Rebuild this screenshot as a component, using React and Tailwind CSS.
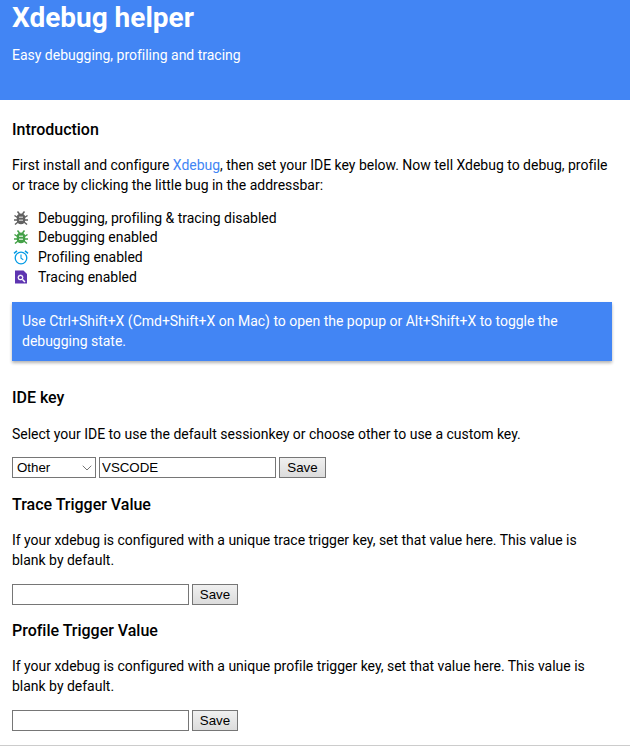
import { ChevronDown } from 'lucide-react'

function BugIcon({ color, eye }) {
  return (
    <svg viewBox="0 0 16 16" className="w-4 h-4 shrink-0">
      <path d="M4.500 1.500l2 2.500M11.500 1.500l-2 2.500M1.500 5.500l3 2M14.500 5.500l-3 2M1 10h3M15 10h-3M2 14.500l3-2.500M14 14.500l-3-2.500" stroke={color} strokeWidth="1.500" fill="none" />
      <path d="M3.800 7c0-2.200 1.900-3.500 4.200-3.500S12.200 4.800 12.200 7v3.500c0 2.200-1.900 3.800-4.200 3.800s-4.200-1.600-4.200-3.800z" fill={color} />
      <rect x="6" y="6.500" width="4" height="1.500" fill={eye} />
      <rect x="6" y="9.500" width="4" height="1.500" fill={eye} />
    </svg>
  )
}

function TraceIcon() {
  return (
    <svg viewBox="0 0 16 16" className="w-4 h-4 shrink-0">
      <path d="M2 1.500h8.500L14 5v9.500H2z" fill="#5e35b1" />
      <circle cx="7.500" cy="8.500" r="2.600" fill="#fff" stroke="#fff" strokeWidth="0.5" />
      <circle cx="7.500" cy="8.500" r="1.600" fill="#5e35b1" />
      <path d="M9.500 10.500l2.500 2.500" stroke="#fff" strokeWidth="1.500" />
    </svg>
  )
}

function AlarmIcon() {
  return (
    <svg viewBox="0 0 16 16" className="w-4 h-4 shrink-0" fill="none" stroke="#039be5">
      <circle cx="8" cy="9" r="5.800" strokeWidth="1.300" />
      <path d="M8 5.500V9.300l2.300 1.400" strokeWidth="1.100" />
      <path d="M1 4.300L4 1.800M15 4.300l-3-2.500" strokeWidth="1.500" />
    </svg>
  )
}

function SaveButton({ width = 'w-[46px]' }) {
  return (
    <button className={`${width} h-[21px] ml-[3px] border border-[#767676] bg-gradient-to-b from-[#f0f0f0] to-[#dcdcdc] text-[13.333px] text-black font-['Liberation_Sans',sans-serif] leading-none`}>
      Save
    </button>
  )
}

function TextBox({ width, value }) {
  return (
    <input
      type="text"
      defaultValue={value}
      className={`${width} h-[21px] border border-[#767676] bg-white px-[2px] text-[13.333px] text-black font-['Liberation_Sans',sans-serif] outline-none`}
    />
  )
}

function Heading({ children }) {
  return <h2 className="text-[16px] font-medium leading-[19px] text-black">{children}</h2>
}

const statuses = [
  { icon: <BugIcon color="#616161" eye="#bdbdbd" />, label: 'Debugging, profiling & tracing disabled' },
  { icon: <BugIcon color="#43a047" eye="#c8e6c9" />, label: 'Debugging enabled' },
  { icon: <AlarmIcon />, label: 'Profiling enabled' },
  { icon: <TraceIcon />, label: 'Tracing enabled' },
]

export default function App() {
  return (
    <div className="h-[747px] overflow-hidden bg-white font-['Roboto',sans-serif] text-[14px] leading-[20px] tracking-[-0.012px] text-black">
      {/* header */}
      <header className="h-[100px] bg-[#4285f4] px-3 text-white">
        <h1 className="text-[28px] font-bold leading-[36px]">Xdebug helper</h1>
        <p className="mt-[9px] text-[14px] leading-[20px]">Easy debugging, profiling and tracing</p>
      </header>

      <main className="pl-3 pr-[18px] pt-[20px] border-b border-[#cccccc] h-[646px]">
        <Heading>Introduction</Heading>
        <p className="mt-[16px]">
          First install and configure <span className="text-[#4285f4]">Xdebug</span>, then set your IDE key below. Now tell Xdebug to debug, profile or trace by clicking the little bug in the addressbar:
        </p>

        <ul className="mt-[13px] flex flex-col">
          {statuses.map(s => (
            <li key={s.label} className="flex items-center gap-[9px] pl-px h-[19.6px]">
              {s.icon}
              <span>{s.label}</span>
            </li>
          ))}
        </ul>

        <div className="mt-[15.6px] h-[59px] bg-[#4285f4] px-[10px] py-[9px] text-white shadow-[0_2px_3px_rgba(0,0,0,0.3)]">
          Use Ctrl+Shift+X (Cmd+Shift+X on Mac) to open the popup or Alt+Shift+X to toggle the debugging state.
        </div>

        <div className="mt-[27px]"><Heading>IDE key</Heading></div>
        <p className="mt-[17px]">Select your IDE to use the default sessionkey or choose other to use a custom key.</p>
        <div className="mt-[13px] flex items-center">
          <div className="relative w-[84px] h-[21px] mr-[3px]">
            <select defaultValue="other" className="appearance-none w-full h-full border border-[#767676] bg-white pl-[4px] text-[13.333px] text-black font-['Liberation_Sans',sans-serif]">
              <option value="other">Other</option>
            </select>
            <ChevronDown className="absolute right-[1px] top-[3px] w-4 h-4 text-[#767676] pointer-events-none" strokeWidth={1.5} />
          </div>
          <TextBox width="w-[177px]" value="VSCODE" />
          <SaveButton width="w-[47px]" />
        </div>

        <div className="mt-[17px]"><Heading>Trace Trigger Value</Heading></div>
        <p className="mt-[16px]">If your xdebug is configured with a unique trace trigger key, set that value here. This value is blank by default.</p>
        <div className="mt-[14px] flex items-center">
          <TextBox width="w-[177px]" />
          <SaveButton />
        </div>

        <div className="mt-[16px]"><Heading>Profile Trigger Value</Heading></div>
        <p className="mt-[16px]">If your xdebug is configured with a unique profile trigger key, set that value here. This value is blank by default.</p>
        <div className="mt-[14px] flex items-center">
          <TextBox width="w-[177px]" />
          <SaveButton />
        </div>
      </main>
    </div>
  )
}
